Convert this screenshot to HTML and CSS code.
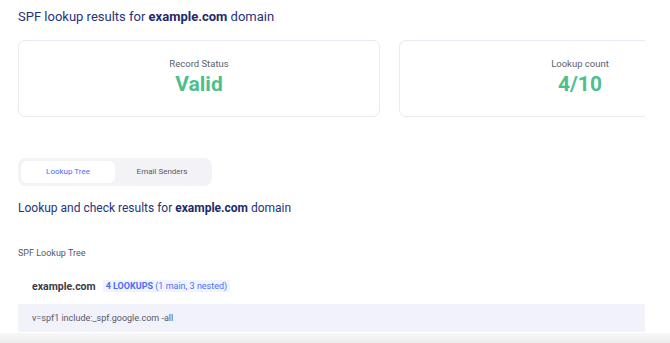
FILE: index.html
```html
<!DOCTYPE html>
<html lang="en">
<head>
  <meta charset="UTF-8" />
  <title>SPF lookup results</title>
  <meta name="viewport" content="width=device-width, initial-scale=1.0" />
  <link rel="stylesheet" href="styles.css">
</head>
<body>
  <div class="page">
    <h1 class="title">SPF lookup results for <b>example.com</b> domain</h1>

    <div class="cards">
      <div class="card">
        <div class="card-label">Record Status</div>
        <div class="card-value">Valid</div>
      </div>
      <div class="card">
        <div class="card-label">Lookup count</div>
        <div class="card-value">4/10</div>
      </div>
    </div>

    <div class="tabs">
      <div class="tab active">Lookup Tree</div>
      <div class="tab">Email Senders</div>
    </div>

    <h2 class="subtitle">Lookup and check results for <b>example.com</b> domain</h2>

    <div class="tree-label">SPF Lookup Tree</div>

    <div class="tree-head">
      <span class="domain">example.com</span>
      <span class="badge"><b>4 LOOKUPS</b> (1 main, 3 nested)</span>
    </div>
    <div class="record">v=spf1 include:_spf.google.com -all</div>
  </div>
  <div class="fade"></div>
</body>
</html>
```

FILE: styles.css
```css
body {
  margin: 0;
  font-family: Roboto, 'Liberation Sans', sans-serif;
  background: #fff;
  color: #333;
}

.page {
  width: 627px;
  height: 333px;
  padding-left: 18px;
  overflow: hidden;
}

.title {
  margin: 0;
  padding-top: 9px;
  height: 31px;
  font-size: 13px;
  font-weight: 400;
  line-height: 16px;
  color: #27337a;
}

.title b,
.subtitle b {
  font-weight: 700;
  color: #1f2a6b;
}

.cards {
  display: flex;
  gap: 19px;
}

.card {
  flex: 0 0 362px;
  height: 77px;
  box-sizing: border-box;
  border: 1px solid #e7ebf4;
  border-radius: 7px;
  text-align: center;
  padding-top: 17px;
}

.card-label {
  font-size: 9.5px;
  color: #5b5e6b;
  line-height: 12px;
}

.card-value {
  font-size: 21px;
  font-weight: 700;
  color: #4dbf8c;
  line-height: 26px;
  margin-top: 1px;
}

.tabs {
  display: flex;
  width: 194px;
  height: 28px;
  box-sizing: border-box;
  margin-top: 41px;
  padding: 3px;
  background: #f3f3f7;
  border-radius: 8px;
}

.tab {
  flex: 0 0 94px;
  font-size: 8px;
  line-height: 22px;
  text-align: center;
  color: #55586a;
}

.tab.active {
  background: #fff;
  color: #4b6ef5;
  border-radius: 6px;
}

.subtitle {
  margin: 14px 0 0;
  font-size: 12px;
  font-weight: 400;
  line-height: 16px;
  color: #27337a;
}

.tree-label {
  margin-top: 31px;
  font-size: 9px;
  line-height: 12px;
  color: #55586a;
}

.tree-head {
  display: flex;
  align-items: center;
  gap: 7px;
  height: 18px;
  margin-top: 18px;
  padding-left: 14px;
}

.domain {
  font-size: 10.5px;
  font-weight: 700;
  color: #3b3c44;
}

.badge {
  font-size: 9px;
  line-height: 12px;
  padding: 0 3px;
  background: #f1f4ff;
  color: #4b6ef5;
}

.badge b {
  font-weight: 700;
}

.record {
  margin-top: 9px;
  height: 28px;
  padding-left: 14px;
  background: #f2f2fb;
  font-size: 9px;
  line-height: 28px;
  color: #55586a;
}

.fade {
  height: 10px;
  background: linear-gradient(#f8f8f8, #ececec);
}
```
